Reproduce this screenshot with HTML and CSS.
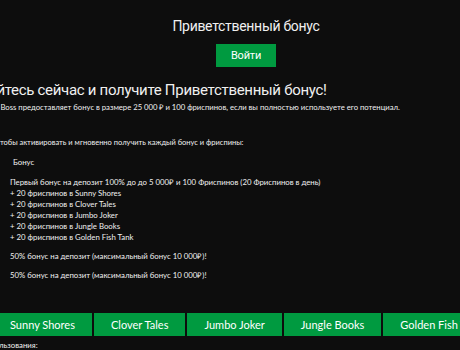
FILE: index.html
```html
<!DOCTYPE html>
<html lang="ru">
<head>
    <meta charset="UTF-8">
    <meta name="viewport" content="width=device-width, initial-scale=1.0">
    <title>Приветственный бонус</title>
    <link rel="stylesheet" href="styles.css">
</head>
<body>
    <header class="hero">
        <h1 class="hero-title">Приветственный бонус</h1>
        <a class="btn-login" href="#">Войти</a>
    </header>

    <main class="content">
        <h2 class="content-title">Зарегистрируйтесь сейчас и получите Приветственный бонус!</h2>
        <p class="lead">Казино Boss предоставляет бонус в размере 25 000 ₽ и 100 фриспинов, если вы полностью используете его потенциал.</p>

        <p class="intro">Чтобы активировать и мгновенно получить каждый бонус и фриспины:</p>

        <div class="bonus">
            <div class="bonus-head">Бонус</div>
            <div class="bonus-body">
                <p class="bonus-item">Первый бонус на депозит 100% до до 5 000₽ и 100 Фриспинов (20 Фриспинов в день)<br>
                + 20 фриспинов в Sunny Shores<br>
                + 20 фриспинов в Clover Tales<br>
                + 20 фриспинов в Jumbo Joker<br>
                + 20 фриспинов в Jungle Books<br>
                + 20 фриспинов в Golden Fish Tank</p>
                <p class="bonus-item">50% бонус на депозит (максимальный бонус 10 000₽)!</p>
                <p class="bonus-item">50% бонус на депозит (максимальный бонус 10 000₽)!</p>
            </div>
        </div>

        <nav class="games">
            <a class="game-btn" href="#">Sunny Shores</a>
            <a class="game-btn" href="#">Clover Tales</a>
            <a class="game-btn" href="#">Jumbo Joker</a>
            <a class="game-btn" href="#">Jungle Books</a>
            <a class="game-btn" href="#">Golden Fish Tank</a>
        </nav>

        <p class="terms">Условия использования:</p>
    </main>
</body>
</html>
```

FILE: styles.css
```css
html,
body {
    overflow-x: hidden;
}

body {
    margin: 0;
    padding: 0;
    background-color: #0d0d0d;
    color: #f0f0f0;
    font-family: 'Lato', 'Liberation Sans', sans-serif;
}

.hero {
    padding: 16px 0 0 32px;
    text-align: center;
}

.hero-title {
    margin: 0;
    font-family: 'Roboto', sans-serif;
    font-size: 14px;
    font-weight: 400;
    line-height: 20px;
    letter-spacing: -0.3px;
}

.btn-login {
    display: inline-block;
    margin-top: 8px;
    width: 60px;
    height: 23px;
    line-height: 23px;
    background-color: #009a40;
    color: #ffffff;
    font-family: 'Roboto', sans-serif;
    font-size: 11px;
    letter-spacing: -0.2px;
    text-decoration: none;
}

.content {
    margin-left: -5px;
    white-space: nowrap;
}

.content-title {
    margin: 13px 0 0;
    font-family: 'Roboto', sans-serif;
    font-size: 15px;
    font-weight: 400;
    line-height: 20px;
    letter-spacing: -0.3px;
    text-indent: -91px;
}

.lead,
.intro,
.bonus-head,
.bonus-item,
.terms {
    font-size: 7.8px;
    line-height: 11px;
}

.lead {
    margin: 2px 0 0;
    font-size: 7.7px;
    text-indent: -22px;
}

.intro {
    margin: 24px 0 0;
    font-size: 7.5px;
}

.bonus {
    margin-top: 9px;
}

.bonus-head {
    padding-left: 18px;
}

.bonus-body {
    padding: 9px 0 0 15px;
}

.bonus-item {
    margin: 0 0 8px;
}

.games {
    display: flex;
    gap: 2px;
    margin: 32px 0 0 -2px;
}

.game-btn {
    flex: none;
    padding: 0 17px;
    height: 23px;
    line-height: 23px;
    background-color: #009a40;
    color: #ffffff;
    font-size: 11px;
    text-decoration: none;
}

.terms {
    margin: 4px 0 0;
    text-indent: -44px;
}
```
